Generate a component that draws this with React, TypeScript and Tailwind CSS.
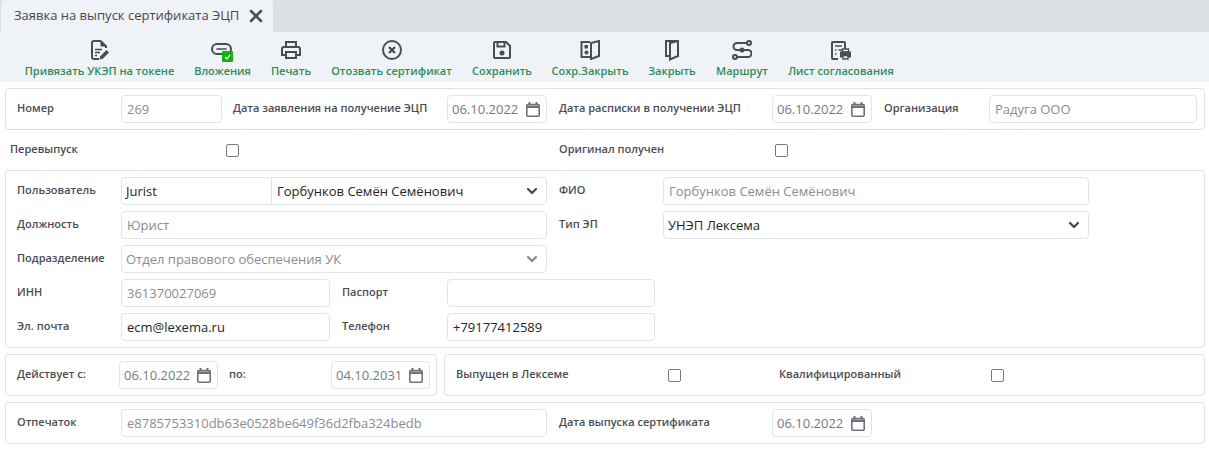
import { ReactNode } from "react";
import { ChevronDown, X } from "lucide-react";

const ink = "#4a4c55";

function DocEditIcon() {
  return (
    <svg width="18" height="20" viewBox="0 0 18 20" fill="none" stroke={ink} strokeWidth="2">
      <path d="M8 19H3a2 2 0 0 1-2-2V3a2 2 0 0 1 2-2h6.500L15 6.500V8" strokeLinejoin="round" />
      <path d="M10 1v5h5.500z" fill={ink} strokeWidth="1" />
      <path d="M4 9.500h7M4 12.500h5M4 15.500h2" strokeWidth="1.500" />
      <path d="M8.500 19.500l.8-3.200 6.200-6.200 2.500 2.500-6.200 6.200z" fill={ink} stroke="none" />
    </svg>
  );
}

function ClipIcon() {
  return (
    <div className="relative h-[22px] w-[23px]">
      <svg width="21" height="12" viewBox="0 0 21 12" fill="none" stroke={ink} className="absolute left-0 top-[5px]">
        <rect x="1" y="1" width="19" height="10" rx="5" strokeWidth="2" />
        <path d="M6 6h9" strokeWidth="1.600" strokeLinecap="round" />
      </svg>
      <div className="absolute left-[11px] top-[13px] flex h-[11px] w-[11px] items-center justify-center rounded-[1px] bg-[#0fb50f]">
        <svg width="7" height="6" viewBox="0 0 7 6" fill="none" stroke="#fff" strokeWidth="1.300">
          <path d="M1 3l1.800 1.800L6 1" />
        </svg>
      </div>
    </div>
  );
}

function PrintIcon() {
  return (
    <svg width="20" height="18" viewBox="0 0 20 18" fill="none" stroke={ink} strokeWidth="2" className="mb-px">
      <path d="M5 6V1h10v5" />
      <path d="M5 14H1V8a2 2 0 0 1 2-2h14a2 2 0 0 1 2 2v6h-4" />
      <path d="M5 11h10v6H5z" />
    </svg>
  );
}

function CancelIcon() {
  return (
    <svg width="20" height="20" viewBox="0 0 20 20" fill="none" stroke={ink}>
      <circle cx="10" cy="10" r="9" strokeWidth="2" />
      <path d="M7 7l6 6M13 7l-6 6" strokeWidth="2.200" />
    </svg>
  );
}

function SaveIcon() {
  return (
    <svg width="18" height="18" viewBox="0 0 18 18" fill="none" stroke={ink} strokeWidth="2" className="mb-px">
      <path d="M2 1h11l4 4v11a1 1 0 0 1-1 1H2a1 1 0 0 1-1-1V2a1 1 0 0 1 1-1z" />
      <path d="M4.500 2v3.500h7V2" />
      <circle cx="9" cy="12" r="2.500" fill={ink} stroke="none" />
    </svg>
  );
}

function SaveCloseIcon() {
  return (
    <svg width="20" height="20" viewBox="0 0 20 20" fill="none" stroke={ink} strokeWidth="2">
      <path d="M10 2H1.500v15H10" />
      <path d="M11 3v16l8-3V1z" />
      <path d="M4.500 5h3.500v3.500H4.500z" fill={ink} stroke="none" />
      <circle cx="6.500" cy="12.500" r="2" fill={ink} stroke="none" />
    </svg>
  );
}

function CloseDoorIcon() {
  return (
    <svg width="14" height="21" viewBox="0 0 14 21" fill="none" stroke={ink} strokeWidth="2" className="-mb-px">
      <path d="M4 16H1V1h12v15l-8 3.500V3l8-2" />
    </svg>
  );
}

function RouteIcon() {
  return (
    <svg width="20" height="20" viewBox="0 0 20 20" fill="none" stroke={ink} strokeWidth="2">
      <circle cx="17" cy="3" r="2" />
      <circle cx="3" cy="17" r="2" />
      <path d="M15 3H5a3.500 3.500 0 0 0 0 7h11a3.500 3.500 0 0 1 0 7H5" />
      <circle cx="10" cy="10" r="2.500" fill={ink} stroke="none" />
    </svg>
  );
}

function SheetIcon() {
  return (
    <svg width="20" height="19" viewBox="0 0 20 19" fill="none" stroke={ink} strokeWidth="2">
      <path d="M7 18H2a1 1 0 0 1-1-1V2a1 1 0 0 1 1-1h11a1 1 0 0 1 1 1v6" />
      <path d="M4 5h7M4 9h1.500M7.500 9H11M4 13h1.500" strokeWidth="1.600" />
      <path d="M9 10.500h11v6H9z" fill={ink} stroke="none" />
      <path d="M11.500 8h6v3h-6z" strokeWidth="1.400" />
      <path d="M12 14.500h5v3.500h-5z" fill="#eff2f7" strokeWidth="1.400" />
    </svg>
  );
}

function CalendarIcon() {
  return (
    <svg width="14" height="15" viewBox="0 0 14 15" className="-mt-[2px] shrink-0" fill="none" stroke="#6f717a">
      <rect x="0.800" y="2.500" width="12.400" height="11.700" rx="1" strokeWidth="1.600" />
      <path d="M1 3.500h12v2.500H1z" fill="#6f717a" stroke="none" />
      <path d="M3.500 0v3M10.500 0v3" strokeWidth="2" />
    </svg>
  );
}

const toolbar = [
  { label: "Привязать УКЭП на токене", icon: <DocEditIcon />, width: "w-[149px]" },
  { label: "Вложения", icon: <ClipIcon />, width: "w-[57px]" },
  { label: "Печать", icon: <PrintIcon />, width: "w-[40px]" },
  { label: "Отозвать сертификат", icon: <CancelIcon />, width: "w-[121px]" },
  { label: "Сохранить", icon: <SaveIcon />, width: "w-[60px]" },
  { label: "Сохр.Закрыть", icon: <SaveCloseIcon />, width: "w-[76px]" },
  { label: "Закрыть", icon: <CloseDoorIcon />, width: "w-[48px]" },
  { label: "Маршрут", icon: <RouteIcon />, width: "w-[52px]" },
  { label: "Лист согласования", icon: <SheetIcon />, width: "w-[106px]" },
];

function Box({ children, className = "" }: { children: ReactNode; className?: string }) {
  return <div className={`rounded-[4px] border border-[#e0e0ea] ${className}`}>{children}</div>;
}

function Label({ children, className = "" }: { children: ReactNode; className?: string }) {
  return <div className={`shrink-0 pb-px text-[11px] font-semibold text-[#4a4c55] ${className}`}>{children}</div>;
}

function Field({ value, className = "", active = false }: { value?: string; className?: string; active?: boolean }) {
  return (
    <div
      className={`flex h-[28px] shrink-0 items-center truncate rounded-[4px] border border-[#e3e3ec] pl-[5px] pt-[2px] text-[13px] ${
        active ? "text-[#212529]" : "text-[#8a8c92]"
      } ${className}`}
    >
      {value}
    </div>
  );
}

function DateField({ value, className = "w-[100px]" }: { value: string; className?: string }) {
  return (
    <div className={`flex h-[28px] shrink-0 items-center justify-between rounded-[4px] border border-[#e3e3ec] pl-[4px] pr-[6px] pt-[2px] text-[13px] text-[#77797f] ${className}`}>
      {value}
      <CalendarIcon />
    </div>
  );
}

function Check({ className = "" }: { className?: string }) {
  return <div className={`h-[13px] w-[13px] shrink-0 rounded-[2px] border border-[#77797f] bg-white ${className}`} />;
}

function Chevron({ className = "text-[#4a4c55]" }: { className?: string }) {
  return <ChevronDown size={16} strokeWidth={3.500} className={`-mt-[2px] ${className}`} />;
}

export default function App() {
  return (
    <div className="h-[451px] w-[1209px] overflow-hidden bg-white font-['Open_Sans',sans-serif]">
      <div className="h-[32px] bg-[#dcdfe4]">
        <div className="ml-px flex h-[32px] w-[272px] items-center rounded-t-[4px] bg-[#eff2f7] pl-[13px] text-[13px] text-[#4a4650]">
          <span>Заявка на выпуск сертификата ЭЦП</span>
          <X size={20} strokeWidth={3} className="ml-[7px] text-[#4a4c55]" />
        </div>
      </div>

      <div className="flex h-[50px] gap-[20px] bg-[#eff2f7] pl-[25px]">
        {toolbar.map((item) => (
          <div key={item.label} className={`flex flex-col items-center ${item.width}`}>
            <div className="flex h-[31px] items-end justify-center pb-[3px]">{item.icon}</div>
            <div className="whitespace-nowrap text-[11px] font-semibold leading-[15px] text-[#2e8b57]">{item.label}</div>
          </div>
        ))}
      </div>

      <div className="pl-[5px] pr-[4px] pt-[6px]">
        <Box className="flex h-[42px] items-center pl-[11px]">
          <Label className="w-[104px]">Номер</Label>
          <Field value="269" className="w-[101px]" />
          <Label className="ml-[11px] w-[214px]">Дата заявления на получение ЭЦП</Label>
          <DateField value="06.10.2022" />
          <Label className="ml-[12px] w-[213px]">Дата расписки в получении ЭЦП</Label>
          <DateField value="06.10.2022" />
          <Label className="ml-[12px] w-[105px]">Организация</Label>
          <Field value="Радуга ООО" className="w-[208px]" />
        </Box>

        <div className="flex h-[40px] items-center">
          <Label className="ml-[5px] w-[216px]">Перевыпуск</Label>
          <Check />
          <Label className="ml-[320px] w-[217px]">Оригинал получен</Label>
          <Check className="-ml-px" />
        </div>

        <Box className="flex h-[178px] flex-col gap-[6px] pl-[11px] pt-[6px]">
          <div className="flex items-center">
            <Label className="w-[104px]">Пользователь</Label>
            <div className="flex h-[28px] w-[426px] items-center rounded-[4px] border border-[#e3e3ec] text-[13px] text-[#212529]">
              <div className="flex h-full w-[150px] items-center border-r border-[#e3e3ec] pl-[4px] pt-[2px]">Jurist</div>
              <div className="flex flex-1 items-center justify-between pl-[5px] pr-[6px] pt-[2px]">
                Горбунков Семён Семёнович
                <Chevron />
              </div>
            </div>
            <Label className="ml-[12px] w-[104px]">ФИО</Label>
            <Field value="Горбунков Семён Семёнович" className="w-[426px]" />
          </div>
          <div className="flex items-center">
            <Label className="w-[104px]">Должность</Label>
            <Field value="Юрист" className="w-[426px]" />
            <Label className="ml-[12px] w-[104px]">Тип ЭП</Label>
            <div className="flex h-[28px] w-[426px] items-center justify-between rounded-[4px] border border-[#e3e3ec] pl-[4px] pr-[6px] pt-[2px] text-[13px] text-[#212529]">
              УНЭП Лексема
              <Chevron />
            </div>
          </div>
          <div className="flex items-center">
            <Label className="w-[104px]">Подразделение</Label>
            <div className="flex h-[28px] w-[426px] items-center justify-between rounded-[4px] border border-[#e3e3ec] pl-[4px] pr-[6px] pt-[2px] text-[13px] text-[#8a8c92]">
              Отдел правового обеспечения УК
              <Chevron className="text-[#8a8c92]" />
            </div>
          </div>
          <div className="flex items-center">
            <Label className="w-[104px]">ИНН</Label>
            <Field value="361370027069" className="w-[209px]" />
            <Label className="ml-[12px] w-[105px]">Паспорт</Label>
            <Field className="w-[208px]" />
          </div>
          <div className="flex items-center">
            <Label className="w-[104px]">Эл. почта</Label>
            <Field value="ecm@lexema.ru" active className="w-[209px]" />
            <Label className="ml-[12px] w-[105px]">Телефон</Label>
            <Field value="+79177412589" active className="w-[208px]" />
          </div>
        </Box>

        <div className="mt-[6px] flex gap-[7px]">
          <Box className="flex h-[42px] w-[432px] items-center pl-[11px]">
            <Label className="w-[102px]">Действует с:</Label>
            <DateField value="06.10.2022" className="w-[99px]" />
            <Label className="ml-[11px] w-[102px]">по:</Label>
            <DateField value="04.10.2031" className="w-[99px]" />
          </Box>
          <Box className="flex h-[42px] flex-1 items-center pl-[11px]">
            <Label className="w-[212px]">Выпущен в Лексеме</Label>
            <Check />
            <Label className="ml-[98px] w-[212px]">Квалифицированный</Label>
            <Check />
          </Box>
        </div>

        <Box className="mt-[6px] flex h-[42px] items-center pl-[11px]">
          <Label className="w-[104px]">Отпечаток</Label>
          <Field value="e8785753310db63e0528be649f36d2fba324bedb" className="w-[426px]" />
          <Label className="ml-[12px] w-[213px]">Дата выпуска сертификата</Label>
          <DateField value="06.10.2022" />
        </Box>
      </div>
    </div>
  );
}
